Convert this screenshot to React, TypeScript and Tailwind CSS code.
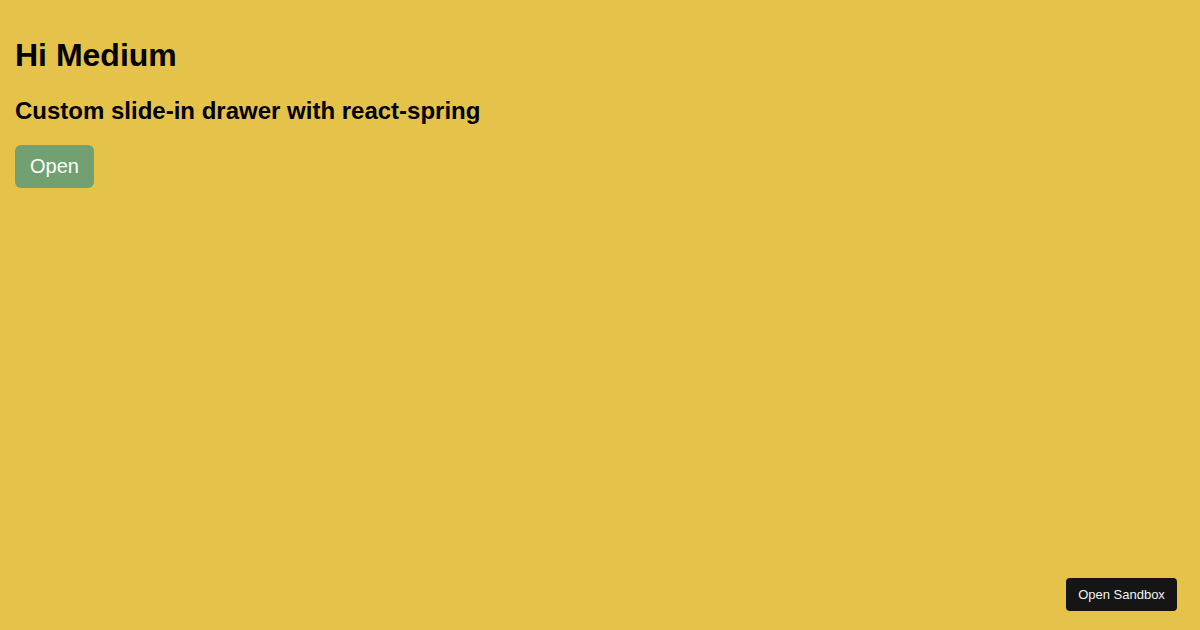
export default function App() {
  return (
    <div className="relative min-h-[630px] w-full bg-[#e5c24a] pt-4 pr-4 pl-[15px] font-['Liberation_Sans',Arial,sans-serif] text-black">
      <h1 className="mt-[21.44px] mb-[22.4px] text-[32px] font-bold leading-[normal]">Hi Medium</h1>
      <h2 className="mt-0 mb-[20.5px] text-[24px] font-bold leading-[normal]">
        Custom slide-in drawer with react-spring
      </h2>
      <button className="h-[43px] w-[79px] rounded-[6px] bg-[#73a070] text-[20px] leading-[23px] text-white">
        Open
      </button>
      <a className="absolute right-[23px] bottom-[19px] flex h-[33px] w-[111px] items-center justify-center rounded-[4px] bg-[#151515] text-[13px] text-[#f2f2f2]">
        Open Sandbox
      </a>
    </div>
  );
}
